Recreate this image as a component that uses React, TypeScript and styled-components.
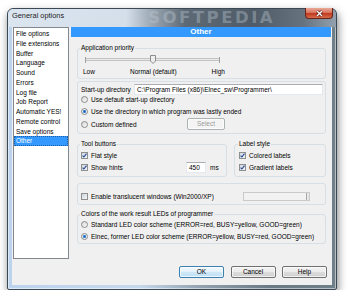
import React from "react";
import styled, { createGlobalStyle } from "styled-components";

const GlobalStyle = createGlobalStyle`
  html, body { margin: 0; padding: 0; background: #fff; }
  body {
    font-family: "Liberation Sans", Arial, sans-serif;
    font-size: 6.5px;
    color: #000;
  }
`;

const Window = styled.div`
  margin: 8px 0 0 7px;
  width: 330px;
  height: 282px;
  box-sizing: border-box;
  display: flex;
  flex-direction: column;
  padding: 0 4px 4px;
  border: 1px solid #3b4856;
  border-radius: 6px 6px 2px 2px;
  background: linear-gradient(90deg, #bcd3ee 0%, #c6d8ec 40%, #93a3b1 58%, #6a7984 80%, #708089 100%);
  box-shadow: 1px 4px 8px rgba(0, 0, 0, 0.5), inset 0 0 0 1px rgba(255, 255, 255, 0.5);
`;

const TitleBar = styled.div`
  height: 18px;
  flex-shrink: 0;
  display: flex;
  align-items: flex-start;
  margin: 0 -4px;
  padding: 0 4px;
  border-radius: 6px 6px 0 0;
  background: linear-gradient(90deg, #dbe5f0 0%, #d4dfea 36%, #9aa6b1 44%, #5d6a76 54%, #4f5c68 75%, #66737f 90%, #93a1ae 100%);
`;

const Title = styled.span`
  padding-top: 2px;
  line-height: 10px;
  font-size: 7.4px;
  color: #1b1b1b;
`;

const Watermark = styled.span`
  margin-left: 84px;
  font-family: "DejaVu Sans", sans-serif;
  font-weight: bold;
  font-size: 16.5px;
  line-height: 18px;
  letter-spacing: 2.5px;
  color: rgba(190, 200, 210, 0.4);
`;

const CloseButton = styled.div`
  margin: -1px -1px 0 auto;
  width: 28px;
  height: 11px;
  box-sizing: border-box;
  display: flex;
  align-items: center;
  justify-content: center;
  border: 1px solid #6a2418;
  border-top: none;
  border-radius: 0 0 4px 4px;
  background: linear-gradient(#eaa897 0%, #d9765f 45%, #c23a1f 55%, #d56c4c 100%);
`;

const Client = styled.div`
  flex: 1;
  display: flex;
  flex-direction: column;
  background: #f0f0f0;
`;

const MainRow = styled.div`
  display: flex;
  gap: 2px;
  height: 232px;
  padding-left: 1px;
`;

const ListBox = styled.div`
  width: 56px;
  box-sizing: border-box;
  border: 1px solid #828790;
  background: #fff;
  padding-top: 1px;
`;

const ListItem = styled.div<{ $selected?: boolean }>`
  line-height: 9.77px;
  height: 9.77px;
  padding-left: 2px;
  white-space: nowrap;
  background: ${(p) => (p.$selected ? "#3399ff" : "transparent")};
  color: ${(p) => (p.$selected ? "#fff" : "#000")};
  outline: ${(p) => (p.$selected ? "1px dotted #1d5fa6" : "none")};
  outline-offset: -1px;
`;

const Panel = styled.div`
  width: 260px;
  display: flex;
  flex-direction: column;
`;

const Header = styled.div`
  height: 10px;
  line-height: 10px;
  background: #3399ff;
  color: #fff;
  font-weight: bold;
  font-size: 8px;
  text-align: center;
`;

const PanelBody = styled.div`
  display: flex;
  flex-direction: column;
  padding: 0 5px 0 6px;
`;

const Group = styled.fieldset<{ $mt: number; $pad: string; $w?: number }>`
  margin: ${(p) => p.$mt}px 0 0;
  padding: ${(p) => p.$pad};
  border: 1px solid #d5dfe5;
  border-radius: 3px;
  min-width: 0;
  ${(p) => (p.$w ? `width: ${p.$w}px; box-sizing: border-box;` : "")}
`;

const Caption = styled.legend`
  padding: 0 1px;
  margin-left: -1px;
  line-height: 8px;
  white-space: nowrap;
`;

const SliderArea = styled.div`
  position: relative;
  margin: 2px 0 0 2px;
  width: 142px;
  height: 10px;
  display: flex;
  align-items: center;
`;

const Track = styled.div`
  margin-left: 2px;
  width: 135px;
  height: 3px;
  box-sizing: border-box;
  border: 1px solid #c3c3c3;
  border-radius: 1px;
  background: #e7eaea;
`;

const Tick = styled.div<{ $x: number }>`
  position: absolute;
  left: ${(p) => p.$x}px;
  top: 3px;
  width: 1px;
  height: 6px;
  background: #a0a0a0;
`;

const Thumb = styled.svg`
  position: absolute;
  left: 67px;
  top: 1px;
`;

const ScaleLabels = styled.div`
  margin: 4px 0 0 2px;
  width: 142px;
  height: 8px;
  line-height: 8px;
  display: flex;
  justify-content: space-between;
`;

const DirRow = styled.div`
  margin-top: 2px;
  display: grid;
  grid-template-columns: 53px 1fr;
  align-items: center;
  height: 11px;
`;

const TextBox = styled.div<{ $w?: number }>`
  height: 11px;
  box-sizing: border-box;
  ${(p) => (p.$w ? `width: ${p.$w}px;` : "")}
  border: 1px solid #e3e9ef;
  border-top-color: #abadb3;
  background: #fff;
  padding-left: 2px;
  line-height: 9px;
  white-space: nowrap;
  overflow: hidden;
`;

const OptionList = styled.div<{ $mt?: number }>`
  margin-top: ${(p) => p.$mt ?? 0}px;
  display: flex;
  flex-direction: column;
`;

const Option = styled.div<{ $h?: number }>`
  display: flex;
  align-items: center;
  gap: 3px;
  height: ${(p) => p.$h ?? 12}px;
  white-space: nowrap;
`;

const OptionGrid = styled.div<{ $cols: string; $h?: number }>`
  display: grid;
  grid-template-columns: ${(p) => p.$cols};
  align-items: center;
  height: ${(p) => p.$h ?? 12}px;
  white-space: nowrap;
`;

const Radio = styled.span<{ $checked?: boolean }>`
  width: 7px;
  height: 7px;
  box-sizing: border-box;
  flex-shrink: 0;
  border-radius: 50%;
  border: 1px solid #8b8b8b;
  background: ${(p) =>
    p.$checked
      ? "radial-gradient(circle, #1b5fb0 0%, #3f8ad8 38%, #e9e9e9 48%, #f7f7f7 100%)"
      : "linear-gradient(135deg, #d6d6d6, #fbfbfb)"};
`;

const Box = styled.span`
  width: 7px;
  height: 7px;
  box-sizing: border-box;
  flex-shrink: 0;
  display: flex;
  border: 1px solid #8e8f8f;
  background: linear-gradient(135deg, #cfd6df, #f4f6f9);
`;

const Button = styled.div<{ $default?: boolean; $disabled?: boolean; $w?: number }>`
  width: ${(p) => p.$w ?? 45}px;
  height: 12px;
  box-sizing: border-box;
  border: 1px solid ${(p) => (p.$default ? "#3c7fb1" : p.$disabled ? "#adb2b5" : "#707070")};
  border-radius: 2px;
  background: ${(p) =>
    p.$disabled
      ? "#f4f4f4"
      : p.$default
      ? "linear-gradient(#f0f8fd 0%, #e3f2fb 50%, #cfe8f8 50%, #bfe0f6 100%)"
      : "linear-gradient(#f2f2f2 0%, #ebebeb 50%, #dddddd 50%, #cfcfcf 100%)"};
  box-shadow: inset 0 0 0 1px rgba(255, 255, 255, 0.7);
  color: ${(p) => (p.$disabled ? "#9a9a9a" : "#000")};
  text-align: center;
  line-height: 10px;
`;

const GroupRow = styled.div`
  display: flex;
  gap: 7px;
`;

const MiniSlider = styled.div`
  width: 67px;
  height: 9px;
  box-sizing: border-box;
  border: 1px solid #cacaca;
  background: #f2f2f2;
  display: flex;
  justify-content: flex-end;
`;

const MiniThumb = styled.div`
  width: 2px;
  height: 100%;
  border-left: 1px solid #a9a9a9;
  background: #e6e6e6;
`;

const ButtonRow = styled.div`
  margin-top: 7px;
  display: flex;
  justify-content: flex-end;
  gap: 6.5px;
  padding-right: 5px;
`;

const pages = [
  "File options",
  "File extensions",
  "Buffer",
  "Language",
  "Sound",
  "Errors",
  "Log file",
  "Job Report",
  "Automatic YES!",
  "Remote control",
  "Save options",
  "Other",
];

function Check() {
  return (
    <Box>
      <svg width="5" height="5" viewBox="0 0 5 5">
        <polyline points="0.6,2.6 1.9,4 4.5,0.6" fill="none" stroke="#23478f" strokeWidth="1.1" />
      </svg>
    </Box>
  );
}

function Unchecked() {
  return <Box />;
}

export default function App() {
  return (
    <>
      <GlobalStyle />
      <Window>
        <TitleBar>
          <Title>General options</Title>
          <Watermark>SOFTPEDIA</Watermark>
          <CloseButton>
            <svg width="9" height="7" viewBox="0 0 9 7">
              <path d="M2 1 L7 6 M7 1 L2 6" stroke="#5a1a10" strokeWidth="2.6" />
              <path d="M2 1 L7 6 M7 1 L2 6" stroke="#fff" strokeWidth="1.4" />
            </svg>
          </CloseButton>
        </TitleBar>
        <Client>
          <MainRow>
            <ListBox>
              {pages.map((name) => (
                <ListItem key={name} $selected={name === "Other"}>
                  {name}
                </ListItem>
              ))}
            </ListBox>
            <Panel>
              <Header>Other</Header>
              <PanelBody>
                <Group $mt={7} $pad="0 2px 2px 3px">
                  <Caption>Application priority</Caption>
                  <SliderArea>
                    <Track />
                    <Tick $x={2} />
                    <Tick $x={136} />
                    <Thumb width="6" height="9" viewBox="0 0 6 9">
                      <path d="M0.5 0.5 H5.5 V6 L3 8.5 L0.5 6 Z" fill="#eeeeee" stroke="#8d8d8d" />
                    </Thumb>
                  </SliderArea>
                  <ScaleLabels>
                    <span>Low</span>
                    <span>Normal (default)</span>
                    <span>High</span>
                  </ScaleLabels>
                </Group>

                <Group $mt={2} $pad="0 2px 2px 3px">
                  <DirRow>
                    <span>Start-up directory</span>
                    <TextBox>C:\Program Files (x86)\Elnec_sw\Programmer\</TextBox>
                  </DirRow>
                  <OptionList $mt={-2}>
                    <Option $h={12.5}>
                      <Radio />
                      <span>Use default start-up directory</span>
                    </Option>
                    <Option $h={12.5}>
                      <Radio $checked />
                      <span>Use the directory in which program was lastly ended</span>
                    </Option>
                    <OptionGrid $cols="106px 38px" $h={12.5}>
                      <Option $h={12.5}>
                        <Radio />
                        <span>Custom defined</span>
                      </Option>
                      <Button $disabled $w={38}>
                        Select
                      </Button>
                    </OptionGrid>
                  </OptionList>
                </Group>

                <GroupRow>
                  <Group $mt={6.5} $pad="1px 2px 3px 3px" $w={150}>
                    <Caption>Tool buttons</Caption>
                    <Option>
                      <Check />
                      <span>Flat style</span>
                    </Option>
                    <OptionGrid $cols="105px 24px auto">
                      <Option>
                        <Check />
                        <span>Show hints</span>
                      </Option>
                      <TextBox $w={20}>450</TextBox>
                      <span>ms</span>
                    </OptionGrid>
                  </Group>
                  <Group $mt={6.5} $pad="1px 2px 3px 4px" $w={92}>
                    <Caption>Label style</Caption>
                    <Option>
                      <Check />
                      <span>Colored labels</span>
                    </Option>
                    <Option>
                      <Check />
                      <span>Gradient labels</span>
                    </Option>
                  </Group>
                </GroupRow>

                <Group $mt={6} $pad="6px 2px 2px 3px">
                  <OptionGrid $cols="162px 67px">
                    <Option>
                      <Unchecked />
                      <span>Enable translucent windows (Win2000/XP)</span>
                    </Option>
                    <MiniSlider>
                      <MiniThumb />
                    </MiniSlider>
                  </OptionGrid>
                </Group>

                <Group $mt={5} $pad="0 2px 1px 3px">
                  <Caption>Colors of the work result LEDs of programmer</Caption>
                  <Option>
                    <Radio />
                    <span>Standard LED color scheme (ERROR=red, BUSY=yellow, GOOD=green)</span>
                  </Option>
                  <Option>
                    <Radio $checked />
                    <span>Elnec, former LED color scheme (ERROR=yellow, BUSY=red, GOOD=green)</span>
                  </Option>
                </Group>
              </PanelBody>
            </Panel>
          </MainRow>
          <ButtonRow>
            <Button $default>OK</Button>
            <Button>Cancel</Button>
            <Button>Help</Button>
          </ButtonRow>
        </Client>
      </Window>
    </>
  );
}
